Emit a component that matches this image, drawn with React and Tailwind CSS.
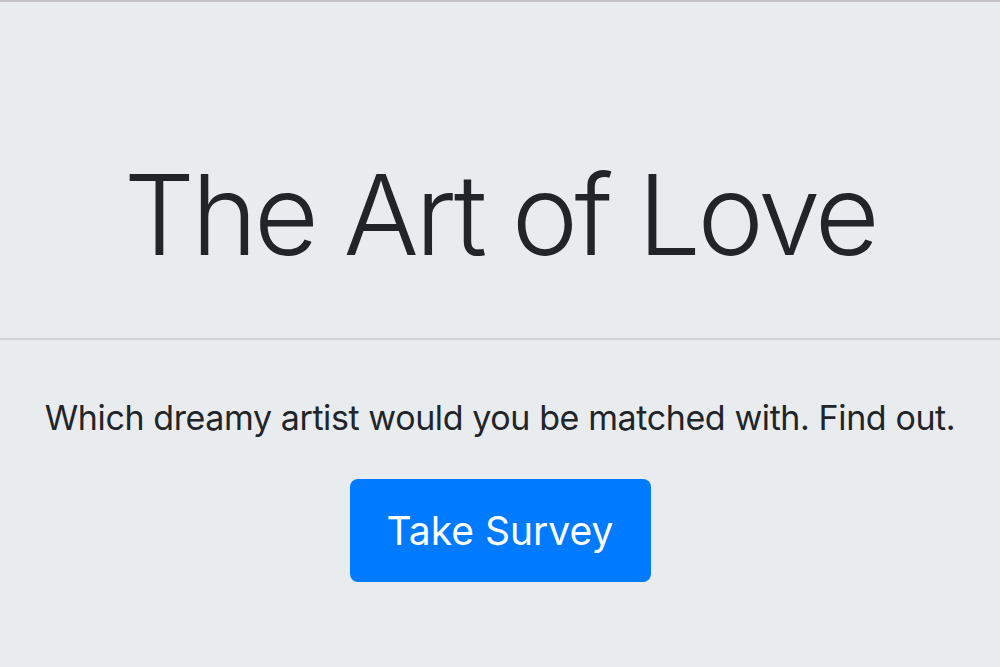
export default function App() {
  return (
    <div
      className="min-h-[667px] w-full bg-[#e9ecef] border-t-2 border-[#c3c3c7] flex flex-col items-center"
      style={{ fontFamily: 'Inter, "Liberation Sans", sans-serif' }}
    >
      <h1 className="mt-[156px] text-[112px] leading-none font-light tracking-[-3.5px] text-[#212529]">
        The Art of Love
      </h1>
      <hr className="mt-[68px] w-full border-t-2 border-[#cfd2d5]" />
      <p className="mt-[61px] text-[34px] leading-none tracking-[-0.4px] text-[#212529]">
        Which dreamy artist would you be matched with. Find out.
      </p>
      <button className="mt-[44px] w-[301px] h-[103px] rounded-[8px] bg-[#007bff] text-white text-[39px] leading-none">
        Take Survey
      </button>
    </div>
  );
}
